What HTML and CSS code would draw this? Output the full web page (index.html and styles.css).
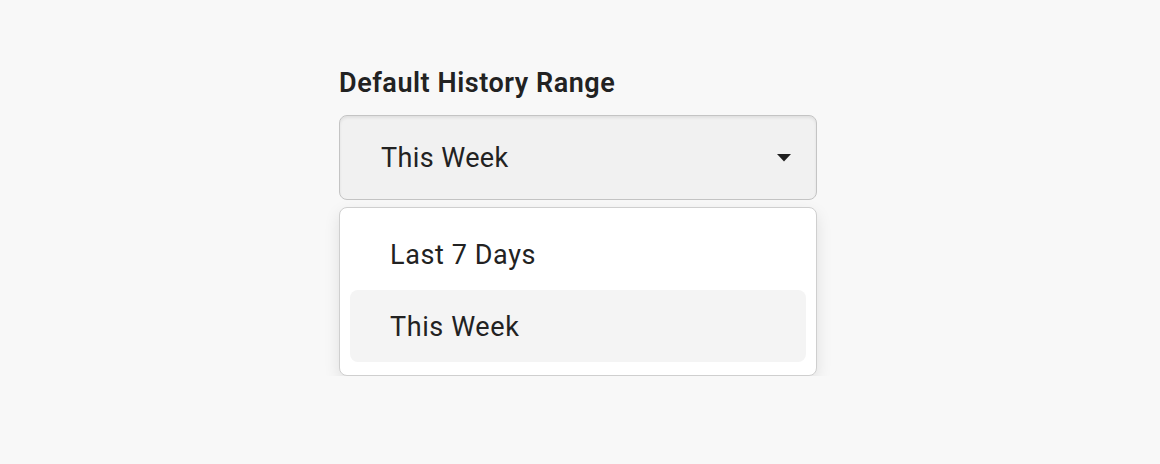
FILE: index.html
```html
<!DOCTYPE html>
<html lang="en">
<head>
<meta charset="utf-8">
<title>Default History Range</title>
<link rel="stylesheet" href="styles.css">
</head>
<body>
<div class="page">
  <div class="field">
    <label class="field-label">Default History Range</label>
    <div class="select">
      <span class="select-value">This Week</span>
      <svg class="caret" width="14" height="8" viewBox="0 0 14 8"><path d="M0 0 L14 0 L7 7.5 Z" fill="#1f1f1f"/></svg>
    </div>
    <ul class="menu">
      <li class="menu-item">Last 7 Days</li>
      <li class="menu-item is-active">This Week</li>
    </ul>
  </div>
</div>
</body>
</html>
```

FILE: styles.css
```css
html, body {
  margin: 0;
  padding: 0;
  background: #f8f8f8;
}
body {
  font-family: Roboto, "Liberation Sans", sans-serif;
  color: #222;
}
.page {
  padding: 66px 0 0 339px;
}
.field {
  width: 478px;
  display: flex;
  flex-direction: column;
}
.field-label {
  font-size: 27px;
  font-weight: 600;
  letter-spacing: 0.55px;
  line-height: 34px;
  color: #222;
  margin-bottom: 15px;
}
.select {
  box-sizing: border-box;
  height: 85px;
  border: 1.5px solid #c4c4c4;
  border-radius: 8px;
  background: #f1f1f1;
  box-shadow: inset 0 2px 3px rgba(0,0,0,0.07);
  display: flex;
  align-items: center;
  justify-content: space-between;
  padding: 0 25px 0 41px;
}
.select-value {
  font-size: 27px;
  letter-spacing: 0.4px;
  color: #222;
}
.caret {
  display: block;
  margin-top: 1px;
}
.menu {
  list-style: none;
  margin: 7px 0 0;
  box-sizing: border-box;
  padding: 10px 10px 13px;
  background: #fff;
  border: 1.5px solid #cfcfcf;
  border-radius: 8px;
  box-shadow: 0 6px 16px rgba(0,0,0,0.1);
}
.menu-item {
  box-sizing: border-box;
  height: 72px;
  display: flex;
  align-items: center;
  padding: 2px 0 0 40px;
  font-size: 27px;
  letter-spacing: 0.6px;
  color: #222;
  border-radius: 8px;
}
.menu-item.is-active {
  background: #f4f4f4;
}
```
